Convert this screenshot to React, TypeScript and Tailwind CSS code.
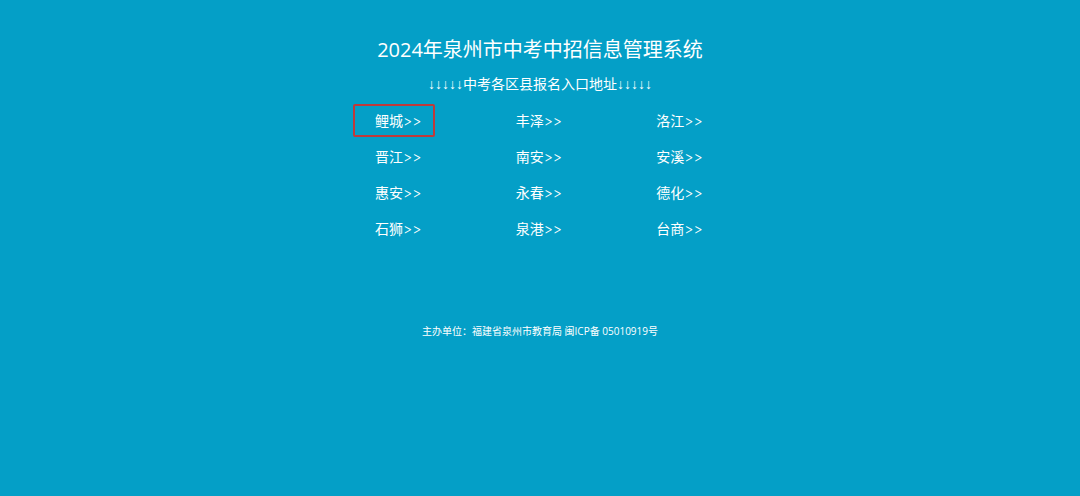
const districts = [
  '鲤城', '丰泽', '洛江',
  '晋江', '南安', '安溪',
  '惠安', '永春', '德化',
  '石狮', '泉港', '台商',
]

const current = '鲤城'

function DistrictLink({ name }: { name: string }) {
  return (
    <a
      href="#"
      className={`block w-[82px] border-2 pl-5 text-sm leading-[29px] whitespace-nowrap hover:underline ${
        name === current ? 'rounded-xs border-[#c03a3a]' : 'border-transparent'
      }`}
    >
      {name}
      <span className="font-light font-['Inter',sans-serif]">&gt;&gt;</span>
    </a>
  )
}

export default function App() {
  return (
    <div className="flex min-h-screen flex-col items-center bg-[#049fc7] px-4 pt-8 text-white font-['Open_Sans','Noto_Sans_CJK_SC',sans-serif]">
      {/* 标题 */}
      <h1 className="text-xl leading-9">2024年泉州市中考中招信息管理系统</h1>
      <p className="mt-1 text-sm leading-6 font-['Liberation_Sans','Noto_Sans_CJK_SC',sans-serif]">
        ↓↓↓↓↓中考各区县报名入口地址↓↓↓↓↓
      </p>

      {/* 各区县入口 */}
      <nav className="mt-2 w-full max-w-[374px]">
        <ul className="grid grid-cols-3 gap-x-12 gap-y-[3px]">
          {districts.map((name) => (
            <li key={name}>
              <DistrictLink name={name} />
            </li>
          ))}
        </ul>
      </nav>

      <footer className="mt-[78px] text-[10px] leading-4">
        主办单位：福建省泉州市教育局 闽ICP备 05010919号
      </footer>
    </div>
  )
}
